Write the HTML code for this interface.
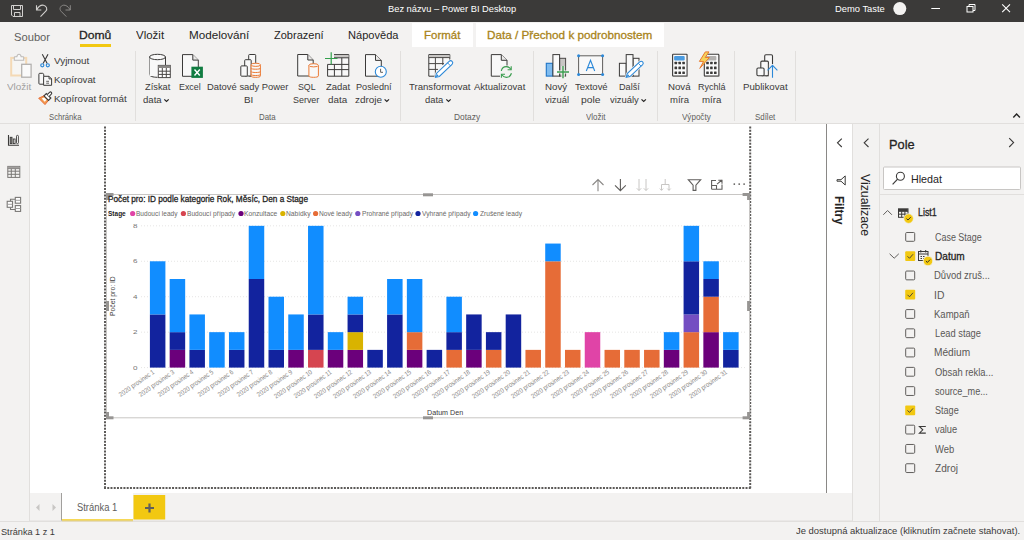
<!DOCTYPE html>
<html><head><meta charset="utf-8"><style>
html,body{margin:0;padding:0;width:1024px;height:540px;overflow:hidden;background:#fff;position:relative;font-family:"Liberation Sans",sans-serif}
body>div,body>svg,body>span{position:absolute}
span{white-space:pre}
</style></head><body>
<div style="left:0px;top:0px;width:1024px;height:22px;background:#3b3a39;"></div>
<div style="left:0px;top:22px;width:1024px;height:101px;background:#f3f2f1;"></div>
<div style="left:0px;top:123px;width:1024px;height:1px;background:#e1dfdd;"></div>
<div style="left:412px;top:23px;width:61px;height:24px;background:#fff;"></div>
<div style="left:476px;top:23px;width:188px;height:24px;background:#fff;"></div>
<div style="left:80px;top:44px;width:31px;height:3px;background:#f2c811;"></div>
<div style="left:0px;top:124px;width:29px;height:397px;background:#f3f2f1;"></div>
<div style="left:29px;top:124px;width:1px;height:397px;background:#e1dfdd;"></div>
<div style="left:30px;top:124px;width:796px;height:369px;background:#fff;"></div>
<div style="left:826px;top:124px;width:1px;height:369px;background:#8a8886;"></div>
<div style="left:827px;top:124px;width:25px;height:369px;background:#fff;"></div>
<div style="left:852px;top:124px;width:1px;height:397px;background:#e1dfdd;"></div>
<div style="left:853px;top:124px;width:26px;height:397px;background:#f3f2f1;"></div>
<div style="left:879px;top:124px;width:1px;height:397px;background:#e1dfdd;"></div>
<div style="left:880px;top:124px;width:144px;height:397px;background:#f3f2f1;"></div>
<div style="left:30px;top:493px;width:822px;height:28px;background:#f3f2f1;"></div>
<div style="left:0px;top:521px;width:1024px;height:1px;background:#e1dfdd;"></div>
<div style="left:0px;top:522px;width:1024px;height:18px;background:#f3f2f1;"></div>
<svg style="left:0;top:0" width="1024" height="540" viewBox="0 0 1024 540"><g fill="none" stroke="#d2d0ce" stroke-width="1"><path d="M11.5 5.5H22.5V16.5H13L11.5 15Z"/><path d="M13.5 5.5V9.5H20.5V5.5"/><path d="M14.5 16.5V12.5H20V16.5"/></g><path d="M36.5 5.2V10H41.3M36.6 9.9C38.5 6.5 41 4.8 43.5 5.2C46.5 5.8 47.8 9 45.8 11.2L40.5 16.6" fill="none" stroke="#d2d0ce" stroke-width="1.1"/><path d="M70.3 5.2V10H65.5M70.2 9.9C68.3 6.5 65.8 4.8 63.3 5.2C60.3 5.8 59 9 61 11.2L66.3 16.6" fill="none" stroke="#8a8886" stroke-width="1"/><circle cx="899.8" cy="8.6" r="6.5" fill="#f3f2f1"/><path d="M931.3 8.5H940" stroke="#fff" stroke-width="1"/><g fill="none" stroke="#fff" stroke-width="1"><rect x="967" y="6.5" width="6" height="5.5"/><path d="M969 6.5V4.5H975V10.5H973"/></g><path d="M1002.2 4.3L1010 12.1M1010 4.3L1002.2 12.1" stroke="#fff" stroke-width="1.1"/><rect x="11.2" y="57.9" width="15" height="17.6" fill="#f6f5f3" stroke="#f4d9b5" stroke-width="2"/><path d="M14.3 60.2V57.5Q14.3 56.8 15 56.8H16.8Q17.3 54.2 19 54.2Q20.7 54.2 21.2 56.8H23Q23.7 56.8 23.7 57.5V60.2Z" fill="#f8f8f8" stroke="#bdbbb9" stroke-width="1.1"/><rect x="21.7" y="64.3" width="9.4" height="12.9" fill="#fafafa" stroke="#b3b1af" stroke-width="1.3"/><path d="M42.3 54.3L47.2 63.6M48 54.3L43.1 63.6" stroke="#3b3a39" stroke-width="1.1" fill="none"/><circle cx="42.3" cy="65.3" r="1.55" fill="none" stroke="#2b88d8" stroke-width="1.2"/><circle cx="47.8" cy="65.3" r="1.55" fill="none" stroke="#2b88d8" stroke-width="1.2"/><path d="M43.5 84.2H39.8Q38.9 84.2 38.9 83.3V74.2Q38.9 73.3 39.8 73.3H42.5Q43.4 73.3 43.6 74.2L43.8 76" fill="#f8f8f8" stroke="#3b3a39" stroke-width="1"/><path d="M43.6 76.3H49L51.6 78.9V85.3H43.6Z" fill="#f8f8f8" stroke="#3b3a39" stroke-width="1"/><path d="M49 76.3V78.9H51.6" fill="none" stroke="#3b3a39" stroke-width="0.9"/><path d="M46.2 81.3H49M46.2 83.2H49" stroke="#3b3a39" stroke-width="0.8"/><path d="M38.7 98.2L44 95.8L48.5 100.3L45 104.6Z" fill="#f39a4e" stroke="#e66c37" stroke-width="1"/><path d="M41.8 98.4L44.2 97.4L46.6 99.8L44.7 101.8Z" fill="#fff"/><path d="M44 95.8L46.3 93.5L50.8 98L48.5 100.3Z" fill="#fff" stroke="#3b3a39" stroke-width="1.2"/><path d="M47.2 94.6L49.5 92.3Q50.5 91.4 51.4 92.3Q52.2 93.2 51.3 94.1L49.1 96.5" fill="#fff" stroke="#3b3a39" stroke-width="1.1"/><path d="M149.5 57V74.5C149.5 76.2 153 77.3 157.5 77.3" fill="#f8f8f8" stroke="#3b3a39" stroke-width="1"/><path d="M149.5 57V76H158V65H165.5V57Z" fill="#f8f8f8"/><ellipse cx="157.5" cy="57" rx="8" ry="2.7" fill="#f8f8f8" stroke="#3b3a39" stroke-width="1"/><path d="M165.5 57V65" stroke="#3b3a39" stroke-width="1"/><rect x="158.3" y="65.4" width="12" height="12.2" fill="#fff" stroke="#4a4846" stroke-width="1"/><rect x="158.3" y="65.4" width="12" height="2.6" fill="#8a8886"/><path d="M158.3 71.2H170.3M158.3 74.4H170.3M162.3 68V77.6M166.3 68V77.6" stroke="#4a4846" stroke-width="1"/><path d="M182.5 54.6H192.8L198.3 60.1V76.3H182.5Z" fill="#f8f8f8" stroke="#3b3a39" stroke-width="1"/><path d="M192.8 54.6V60.1H198.3" fill="#eae9e8" stroke="#3b3a39" stroke-width="1"/><rect x="191.4" y="66.7" width="11.5" height="11.2" fill="#107c41"/><path d="M194.5 69.5L199.8 75.5M199.8 69.5L194.5 75.5" stroke="#fff" stroke-width="1.4"/><g fill="#f8f8f8" stroke="#3b3a39" stroke-width="1"><rect x="248.7" y="54.5" width="7" height="21.5" rx="0.8"/><rect x="244.7" y="59.7" width="6.5" height="16.3" rx="0.8"/><rect x="240.8" y="65.9" width="6.5" height="10.3" rx="0.8"/></g><g fill="#f8f8f8" stroke="#eb7a35" stroke-width="1"><path d="M251.1 64.8V75.9C251.1 77 253.3 77.3 255.8 77.3C258.3 77.3 260.4 77 260.4 75.9V64.8"/><ellipse cx="255.75" cy="64.8" rx="4.65" ry="1.6"/><path d="M251.1 68.3C251.1 69.5 260.4 69.5 260.4 68.3M251.1 71.6C251.1 72.8 260.4 72.8 260.4 71.6M251.1 74.6C251.1 75.8 260.4 75.8 260.4 74.6" fill="none"/></g><path d="M297.7 54.5H307.8L313.2 60V76H297.7Z" fill="#f8f8f8" stroke="#3b3a39" stroke-width="1"/><path d="M307.8 54.5V60H313.2" fill="#eae9e8" stroke="#3b3a39" stroke-width="1"/><g fill="#f8f8f8" stroke="#eb7a35" stroke-width="1"><path d="M308.9 65.3V75.9C308.9 77 311.2 77.3 313.6 77.3C316 77.3 318.4 77 318.4 75.9V65.3"/><ellipse cx="313.65" cy="65.3" rx="4.75" ry="1.6"/></g><path d="M327.6 64.4V76.2H348.8V54.6H334" fill="#f8f8f8" stroke="#3b3a39" stroke-width="1"/><rect x="334" y="55" width="14.5" height="2.6" fill="#c8c6c4"/><path d="M334 57.8H348.8M327.6 64.4H348.8M327.6 69.6H348.8M334.4 64.4V76.2M341.8 57.8V76.2" stroke="#3b3a39" stroke-width="1"/><path d="M325 58.5H337.5M331.2 52.3V64.6" stroke="#33a04d" stroke-width="1.2"/><path d="M365.5 54.6H375.5L381.3 60.4V76.2H365.5Z" fill="#f8f8f8" stroke="#3b3a39" stroke-width="1"/><path d="M375.5 54.6V60.4H381.3" fill="#eae9e8" stroke="#3b3a39" stroke-width="1"/><circle cx="380.8" cy="71.7" r="5.5" fill="#fff" stroke="#2b88d8" stroke-width="1.1"/><path d="M380.6 68.8V72.3H383" fill="none" stroke="#605e5c" stroke-width="1"/><path d="M449.8 60V54.6H428.8V76.2H436" fill="#f8f8f8" stroke="#3b3a39" stroke-width="1"/><rect x="429.2" y="55" width="20.3" height="2.4" fill="#c8c6c4"/><path d="M428.8 57.6H449.8M428.8 63.6H444M428.8 69.4H438M435.4 57.6V76.2M442.8 57.6V65" stroke="#4a4846" stroke-width="1"/><path d="M435.50 77.20L436.44 73.40L449.15 61.28A2.1 2.1 0 0 1 452.05 64.32L439.34 76.44Z" fill="none" stroke="#f3f2f1" stroke-width="2.4"/><path d="M435.50 77.20L436.44 73.40L449.15 61.28A2.1 2.1 0 0 1 452.05 64.32L439.34 76.44Z" fill="#fff" stroke="#2b88d8" stroke-width="1.05"/><path d="M450.46 65.84L447.56 62.80" stroke="#2b88d8" stroke-width="0.9"/><path d="M435.50 77.20L437.16 74.16L438.61 75.68Z" fill="#2b88d8"/><path d="M491.3 54.6H501.3L507 60.3V76.2H491.3Z" fill="#f8f8f8" stroke="#3b3a39" stroke-width="1"/><path d="M501.3 54.6V60.3H507" fill="#eae9e8" stroke="#3b3a39" stroke-width="1"/><rect x="500" y="65.5" width="13" height="13" fill="#f3f2f1"/><path d="M501.3 71C501.8 68.2 503.8 66.6 506.3 66.6C508.4 66.6 509.8 67.7 510.8 69.2M511.4 73.2C510.8 75.8 508.8 77.4 506.3 77.4C504.2 77.4 502.8 76.3 501.8 74.8" fill="none" stroke="#3a9d4f" stroke-width="1.1"/><path d="M511.2 66.2V69.8H507.6M501.4 77.8V74.2H505" fill="none" stroke="#3a9d4f" stroke-width="1.1"/><rect x="546.3" y="63.3" width="6.4" height="12.8" fill="#7fbcf0" stroke="#1f75c7" stroke-width="1.1"/><rect x="559.6" y="58.3" width="6" height="17.8" fill="#c8c6c4" stroke="#4a4846" stroke-width="1"/><rect x="552.9" y="54.6" width="6.7" height="21.5" fill="#fafafa" stroke="#3b3a39" stroke-width="1"/><path d="M557 72H569M563 66V78.2" stroke="#f3f2f1" stroke-width="3.2"/><path d="M557 72H569M563 66V78.2" stroke="#3a9d4f" stroke-width="1.4"/><rect x="578.6" y="55.8" width="24" height="18.7" fill="#f8f8f8" stroke="#605e5c" stroke-width="1"/><g fill="#2b88d8"><circle cx="578.6" cy="55.8" r="1.5"/><circle cx="602.6" cy="55.8" r="1.5"/><circle cx="578.6" cy="74.5" r="1.5"/><circle cx="602.6" cy="74.5" r="1.5"/></g><path d="M586.3 71L590.5 60.3L594.7 71M587.7 67.6H593.3" fill="none" stroke="#2b88d8" stroke-width="1.1"/><g fill="#f8f8f8" stroke="#3b3a39" stroke-width="1"><rect x="633" y="58.3" width="6" height="17.8"/><rect x="619.4" y="63.3" width="6.8" height="12.8"/><rect x="626.2" y="54.6" width="6.8" height="21.5"/></g><path d="M626.20 77.30L627.25 73.59L639.94 61.74A2.0 2.0 0 0 1 642.66 64.66L629.98 76.51Z" fill="none" stroke="#f3f2f1" stroke-width="2.4"/><path d="M626.20 77.30L627.25 73.59L639.94 61.74A2.0 2.0 0 0 1 642.66 64.66L629.98 76.51Z" fill="#fff" stroke="#2b88d8" stroke-width="1.05"/><path d="M641.06 66.16L638.33 63.24" stroke="#2b88d8" stroke-width="0.9"/><path d="M626.20 77.30L627.93 74.32L629.29 75.78Z" fill="#2b88d8"/><rect x="672.6" y="54.3" width="14.5" height="21.8" rx="0.6" fill="#fafafa" stroke="#3b3a39" stroke-width="1.1"/><path d="M687.4 55V76.4H673.1" fill="none" stroke="#8a8886" stroke-width="0.8"/><rect x="674.1" y="56.1" width="10.6" height="4.5" rx="1" fill="#4a9be0"/><rect x="674.5000000000001" y="61.75" width="2.6" height="2.6" rx="0.5" fill="#3b3a39"/><rect x="678.4000000000001" y="61.75" width="2.6" height="2.6" rx="0.5" fill="#3b3a39"/><rect x="682.3000000000001" y="61.75" width="2.6" height="2.6" rx="0.5" fill="#3b3a39"/><rect x="674.5000000000001" y="66.60000000000001" width="2.6" height="2.6" rx="0.5" fill="#3b3a39"/><rect x="678.4000000000001" y="66.60000000000001" width="2.6" height="2.6" rx="0.5" fill="#3b3a39"/><rect x="682.3000000000001" y="66.60000000000001" width="2.6" height="2.6" rx="0.5" fill="#3b3a39"/><rect x="674.5000000000001" y="71.5" width="2.6" height="2.6" rx="0.5" fill="#3b3a39"/><rect x="678.4000000000001" y="71.5" width="2.6" height="2.6" rx="0.5" fill="#3b3a39"/><rect x="682.3000000000001" y="71.5" width="2.6" height="2.6" rx="0.5" fill="#3b3a39"/><rect x="704.3" y="54.3" width="14.5" height="21.8" rx="0.6" fill="#fafafa" stroke="#3b3a39" stroke-width="1.1"/><path d="M719.0999999999999 55V76.4H704.8" fill="none" stroke="#8a8886" stroke-width="0.8"/><rect x="705.8" y="56.1" width="10.6" height="4.5" rx="1" fill="#b3b1af"/><rect x="706.2" y="61.75" width="2.6" height="2.6" rx="0.5" fill="#3b3a39"/><rect x="710.1" y="61.75" width="2.6" height="2.6" rx="0.5" fill="#3b3a39"/><rect x="714.0" y="61.75" width="2.6" height="2.6" rx="0.5" fill="#3b3a39"/><rect x="706.2" y="66.60000000000001" width="2.6" height="2.6" rx="0.5" fill="#3b3a39"/><rect x="710.1" y="66.60000000000001" width="2.6" height="2.6" rx="0.5" fill="#3b3a39"/><rect x="714.0" y="66.60000000000001" width="2.6" height="2.6" rx="0.5" fill="#3b3a39"/><rect x="706.2" y="71.5" width="2.6" height="2.6" rx="0.5" fill="#3b3a39"/><rect x="710.1" y="71.5" width="2.6" height="2.6" rx="0.5" fill="#3b3a39"/><rect x="714.0" y="71.5" width="2.6" height="2.6" rx="0.5" fill="#3b3a39"/><path d="M705.3 51.9L699.4 61.4H703.6L699.8 68.4L709.4 57.5H705.2L709 51.9Z" fill="#f5d35a" stroke="#e8792f" stroke-width="1"/><g fill="#f8f8f8" stroke="#3b3a39" stroke-width="1.1"><rect x="764.7" y="54.7" width="7.8" height="21" rx="1.2"/><rect x="760.8" y="61.1" width="7.6" height="14.6" rx="1.2"/><rect x="756.9" y="68" width="7.2" height="7.7" rx="1.2"/></g><rect x="768.9" y="64" width="9.6" height="14" fill="#f3f2f1"/><path d="M772.5 77.8V65.4M767.6 70.4L772.5 65.4L777.4 70.4" fill="none" stroke="#2b88d8" stroke-width="1.1"/><path d="M164.3 99.4L166.5 101.5L168.7 99.4" fill="none" stroke="#252423" stroke-width="1.2"/><path d="M384.6 99.4L386.8 101.5L389.0 99.4" fill="none" stroke="#252423" stroke-width="1.2"/><path d="M446.3 99.4L448.5 101.5L450.7 99.4" fill="none" stroke="#252423" stroke-width="1.2"/><path d="M641.5 99.4L643.7 101.5L645.9000000000001 99.4" fill="none" stroke="#252423" stroke-width="1.2"/><path d="M135.5 51V121" stroke="#e1dfdd" stroke-width="1"/><path d="M400.5 51V121" stroke="#e1dfdd" stroke-width="1"/><path d="M533.5 51V121" stroke="#e1dfdd" stroke-width="1"/><path d="M657.5 51V121" stroke="#e1dfdd" stroke-width="1"/><path d="M734.5 51V121" stroke="#e1dfdd" stroke-width="1"/><path d="M795.5 51V121" stroke="#e1dfdd" stroke-width="1"/><path d="M1013.3 117.4L1016.6 114L1019.9 117.4" fill="none" stroke="#252423" stroke-width="1.4"/><path d="M8.5 135V145.2H19" fill="none" stroke="#3b3a39" stroke-width="1.1"/><rect x="10.2" y="137.3" width="1.8" height="6.3" fill="#8a8886" stroke="#3b3a39" stroke-width="0.9"/><rect x="13.3" y="139" width="1.8" height="4.6" fill="#fff" stroke="#3b3a39" stroke-width="0.9"/><rect x="16.5" y="135.4" width="1.9" height="8.2" rx="0.8" fill="#fff" stroke="#3b3a39" stroke-width="0.9"/><g fill="none" stroke="#7a7876" stroke-width="1"><rect x="7.8" y="166.4" width="12" height="11"/><path d="M7.8 168.6H19.8M7.8 171.2H19.8M7.8 174.3H19.8M11.3 168.6V177.4M15.3 168.6V177.4"/></g><rect x="8" y="166.6" width="11.6" height="1.8" fill="#a19f9d"/><g fill="#fff" stroke="#7a7876" stroke-width="1.1"><path d="M10.5 201.1V199.2H15M10.5 207.5V209.5H15" fill="none"/><rect x="7.2" y="201.3" width="5.3" height="6"/><rect x="15.3" y="197.4" width="5.3" height="5.8"/><rect x="15.3" y="205.6" width="5.3" height="5.8"/></g><path d="M7.2 204.3H12.5M15.3 200.3H20.6M15.3 208.5H20.6" stroke="#9a9896" stroke-width="0.9"/><path d="M841.8 138.6L837.5 142.8L841.8 147" fill="none" stroke="#3b3a39" stroke-width="1.1"/><path d="M868.5 138.6L864.2 142.8L868.5 147" fill="none" stroke="#3b3a39" stroke-width="1.1"/><path d="M845.2 175.9V185L841 181.2H837V179.7H841Z" fill="none" stroke="#3b3a39" stroke-width="1"/><path d="M1009.2 138.2L1013.6 142.6L1009.2 147" fill="none" stroke="#3b3a39" stroke-width="1.1"/><rect x="883.5" y="167" width="137" height="22.5" rx="1" fill="#fff" stroke="#c8c6c4" stroke-width="1"/><circle cx="900.4" cy="176.3" r="4" fill="none" stroke="#3b3a39" stroke-width="1.1"/><path d="M897.6 179.2L892.6 184.4" stroke="#3b3a39" stroke-width="1.2"/><path d="M880 194.5H1024" stroke="#e1dfdd" stroke-width="1"/><path d="M883.3 214.8L887.6 210.5L891.9 214.8" fill="none" stroke="#605e5c" stroke-width="1"/><g fill="none" stroke="#3b3a39" stroke-width="1"><rect x="898.5" y="208.8" width="9.5" height="8.5"/><path d="M898.5 211.3H908M898.5 214.2H908M901.7 211.3V217.3M904.9 211.3V217.3"/></g><rect x="898.7" y="209" width="9.1" height="2.2" fill="#3b3a39"/><circle cx="908.6" cy="218.6" r="4.8" fill="#f2c811" stroke="#f3f2f1" stroke-width="0.8"/><path d="M906.5 218.6L908 220L910.7 217.2" fill="none" stroke="#252423" stroke-width="0.9"/><rect x="905.7" y="232.50" width="9" height="8.8" rx="1" fill="none" stroke="#605e5c" stroke-width="1"/><rect x="905.2" y="251.27" width="10" height="9.8" rx="1" fill="#f2c811"/><path d="M907.5 256.27L909.5 258.27L913 254.27" fill="none" stroke="#3b3a39" stroke-width="0.9"/><rect x="905.7" y="271.04" width="9" height="8.8" rx="1" fill="none" stroke="#605e5c" stroke-width="1"/><rect x="905.2" y="289.81" width="10" height="9.8" rx="1" fill="#f2c811"/><path d="M907.5 294.81L909.5 296.81L913 292.81" fill="none" stroke="#3b3a39" stroke-width="0.9"/><rect x="905.7" y="309.58" width="9" height="8.8" rx="1" fill="none" stroke="#605e5c" stroke-width="1"/><rect x="905.7" y="328.85" width="9" height="8.8" rx="1" fill="none" stroke="#605e5c" stroke-width="1"/><rect x="905.7" y="348.12" width="9" height="8.8" rx="1" fill="none" stroke="#605e5c" stroke-width="1"/><rect x="905.7" y="367.39" width="9" height="8.8" rx="1" fill="none" stroke="#605e5c" stroke-width="1"/><rect x="905.7" y="386.66" width="9" height="8.8" rx="1" fill="none" stroke="#605e5c" stroke-width="1"/><rect x="905.2" y="405.43" width="10" height="9.8" rx="1" fill="#f2c811"/><path d="M907.5 410.43L909.5 412.43L913 408.43" fill="none" stroke="#3b3a39" stroke-width="0.9"/><rect x="905.7" y="425.20" width="9" height="8.8" rx="1" fill="none" stroke="#605e5c" stroke-width="1"/><rect x="905.7" y="444.47" width="9" height="8.8" rx="1" fill="none" stroke="#605e5c" stroke-width="1"/><rect x="905.7" y="463.74" width="9" height="8.8" rx="1" fill="none" stroke="#605e5c" stroke-width="1"/><path d="M889.6 253.8L894.2 258.2L898.8 253.8" fill="none" stroke="#605e5c" stroke-width="1"/><g fill="none" stroke="#3b3a39" stroke-width="1"><rect x="918.5" y="251.5" width="9.5" height="9"/><path d="M918.5 254H928M920.8 250V252.5M925.7 250V252.5M920.5 256.5H922M923 256.5H924.5M920.5 258.5H922M923 258.5H924.5"/></g><circle cx="928" cy="261" r="4.8" fill="#f2c811" stroke="#f3f2f1" stroke-width="0.8"/><path d="M925.9 261L927.4 262.4L930.1 259.6" fill="none" stroke="#252423" stroke-width="0.9"/><path d="M925.8 426.5H919.4L922.8 429.8L919.4 433.1H925.8" fill="none" stroke="#3b3a39" stroke-width="1.05"/><path d="M39.5 504L36 507.5L39.5 511Z" fill="#c8c6c4"/><path d="M52.5 504L56 507.5L52.5 511Z" fill="#c8c6c4"/><rect x="62" y="493" width="71" height="28" fill="#fff"/><path d="M61.5 493V521" stroke="#a19f9d" stroke-width="1"/><rect x="62" y="519.3" width="71" height="2" fill="#f2c811"/><rect x="133.5" y="495" width="31.7" height="24.5" fill="#f2c811"/><path d="M145 508H154M149.5 503.5V512.5" stroke="#605e5c" stroke-width="2.2"/><path d="M30 521H852" stroke="#e1dfdd" stroke-width="1"/></svg>
<svg style="left:0;top:0" width="1024" height="540" viewBox="0 0 1024 540"><path d="M105 126.5V489M750.2 126.5V489M104 488H751.2" fill="none" stroke="#5c5a58" stroke-width="2" stroke-dasharray="2 1.24"/><path d="M106.5 194.5H749.5V417.8H106.5Z" fill="none" stroke="#c8c6c4" stroke-width="1"/><g fill="#979593"><rect x="106" y="193" width="7.5" height="3"/><rect x="106" y="193" width="3" height="7"/><rect x="423" y="193.3" width="10" height="3"/><rect x="742.6" y="193" width="7.5" height="3"/><rect x="747.1" y="193" width="3" height="7"/><rect x="106" y="301" width="3" height="10"/><rect x="747.1" y="301" width="3" height="10"/><rect x="106" y="416.3" width="7.5" height="3"/><rect x="106" y="412" width="3" height="7"/><rect x="423" y="416.3" width="10" height="3"/><rect x="742.6" y="416.3" width="7.5" height="3"/><rect x="747.1" y="412" width="3" height="7"/></g><path d="M598 191.3V179.6M592.5 185L598 179.5L603.5 185" fill="none" stroke="#8a8886" stroke-width="1.1"/><path d="M620.4 179V190.7M615 185.3L620.4 190.7L625.8 185.3" fill="none" stroke="#605e5c" stroke-width="1.1"/><path d="M639 179V190.5M636.8 188.3L639 190.5L641.2 188.3M646 179V190.5M643.8 188.3L646 190.5L648.2 188.3" fill="none" stroke="#c8c6c4" stroke-width="1"/><path d="M665.2 179V184.5M661.5 190.3V184.5H669V190.3M659.8 188.6L661.5 190.3L663.2 188.6M667.3 188.6L669 190.3L670.7 188.6" fill="none" stroke="#c8c6c4" stroke-width="1"/><path d="M688.3 179.7H700.7L695.9 185.2V190.4H693.1V185.2Z" fill="none" stroke="#605e5c" stroke-width="1.1"/><path d="M711.6 189.2V180.5H716M722 184.5V189.2H711.6M711.6 185.5H716.5V189.2M717 184.2L722 180M718.3 180.2H722V183.8" fill="none" stroke="#605e5c" stroke-width="1.1"/><g fill="#605e5c"><circle cx="734.3" cy="184.1" r="0.9"/><circle cx="739.2" cy="184.1" r="0.9"/><circle cx="744.1" cy="184.1" r="0.9"/></g><path d="M141 367.60H746" stroke="#e6e5e4" stroke-width="1" stroke-dasharray="1 2"/><path d="M141 332.16H746" stroke="#e6e5e4" stroke-width="1" stroke-dasharray="1 2"/><path d="M141 296.72H746" stroke="#e6e5e4" stroke-width="1" stroke-dasharray="1 2"/><path d="M141 261.28H746" stroke="#e6e5e4" stroke-width="1" stroke-dasharray="1 2"/><path d="M141 225.84H746" stroke="#e6e5e4" stroke-width="1" stroke-dasharray="1 2"/><rect x="149.90" y="314.44" width="15.5" height="53.16" fill="#12239e"/><rect x="149.90" y="261.28" width="15.5" height="53.16" fill="#118dff"/><rect x="169.67" y="349.88" width="15.5" height="17.72" fill="#6b007b"/><rect x="169.67" y="332.16" width="15.5" height="17.72" fill="#12239e"/><rect x="169.67" y="279.00" width="15.5" height="53.16" fill="#118dff"/><rect x="189.43" y="349.88" width="15.5" height="17.72" fill="#12239e"/><rect x="189.43" y="314.44" width="15.5" height="35.44" fill="#118dff"/><rect x="209.20" y="332.16" width="15.5" height="35.44" fill="#118dff"/><rect x="228.96" y="349.88" width="15.5" height="17.72" fill="#12239e"/><rect x="228.96" y="332.16" width="15.5" height="17.72" fill="#118dff"/><rect x="248.73" y="279.00" width="15.5" height="88.60" fill="#12239e"/><rect x="248.73" y="225.84" width="15.5" height="53.16" fill="#118dff"/><rect x="268.50" y="349.88" width="15.5" height="17.72" fill="#12239e"/><rect x="268.50" y="296.72" width="15.5" height="53.16" fill="#118dff"/><rect x="288.26" y="349.88" width="15.5" height="17.72" fill="#6b007b"/><rect x="288.26" y="314.44" width="15.5" height="35.44" fill="#118dff"/><rect x="308.03" y="349.88" width="15.5" height="17.72" fill="#d64550"/><rect x="308.03" y="314.44" width="15.5" height="35.44" fill="#12239e"/><rect x="308.03" y="225.84" width="15.5" height="88.60" fill="#118dff"/><rect x="327.79" y="349.88" width="15.5" height="17.72" fill="#6b007b"/><rect x="327.79" y="332.16" width="15.5" height="17.72" fill="#118dff"/><rect x="347.56" y="349.88" width="15.5" height="17.72" fill="#6b007b"/><rect x="347.56" y="332.16" width="15.5" height="17.72" fill="#d9b300"/><rect x="347.56" y="314.44" width="15.5" height="17.72" fill="#12239e"/><rect x="347.56" y="296.72" width="15.5" height="17.72" fill="#118dff"/><rect x="367.33" y="349.88" width="15.5" height="17.72" fill="#12239e"/><rect x="387.09" y="314.44" width="15.5" height="53.16" fill="#12239e"/><rect x="387.09" y="279.00" width="15.5" height="35.44" fill="#118dff"/><rect x="406.86" y="349.88" width="15.5" height="17.72" fill="#6b007b"/><rect x="406.86" y="332.16" width="15.5" height="17.72" fill="#e66c37"/><rect x="406.86" y="279.00" width="15.5" height="53.16" fill="#118dff"/><rect x="426.62" y="349.88" width="15.5" height="17.72" fill="#12239e"/><rect x="446.39" y="349.88" width="15.5" height="17.72" fill="#e66c37"/><rect x="446.39" y="332.16" width="15.5" height="17.72" fill="#12239e"/><rect x="446.39" y="296.72" width="15.5" height="35.44" fill="#118dff"/><rect x="466.16" y="349.88" width="15.5" height="17.72" fill="#6b007b"/><rect x="466.16" y="314.44" width="15.5" height="35.44" fill="#12239e"/><rect x="485.92" y="349.88" width="15.5" height="17.72" fill="#e66c37"/><rect x="485.92" y="332.16" width="15.5" height="17.72" fill="#12239e"/><rect x="505.69" y="314.44" width="15.5" height="53.16" fill="#12239e"/><rect x="525.45" y="349.88" width="15.5" height="17.72" fill="#e66c37"/><rect x="545.22" y="261.28" width="15.5" height="106.32" fill="#e66c37"/><rect x="545.22" y="243.56" width="15.5" height="17.72" fill="#118dff"/><rect x="564.99" y="349.88" width="15.5" height="17.72" fill="#e66c37"/><rect x="584.75" y="332.16" width="15.5" height="35.44" fill="#e044a7"/><rect x="604.52" y="349.88" width="15.5" height="17.72" fill="#e66c37"/><rect x="624.28" y="349.88" width="15.5" height="17.72" fill="#e66c37"/><rect x="644.05" y="349.88" width="15.5" height="17.72" fill="#e66c37"/><rect x="663.82" y="349.88" width="15.5" height="17.72" fill="#6b007b"/><rect x="663.82" y="332.16" width="15.5" height="17.72" fill="#118dff"/><rect x="683.58" y="332.16" width="15.5" height="35.44" fill="#e66c37"/><rect x="683.58" y="314.44" width="15.5" height="17.72" fill="#744ec2"/><rect x="683.58" y="261.28" width="15.5" height="53.16" fill="#12239e"/><rect x="683.58" y="225.84" width="15.5" height="35.44" fill="#118dff"/><rect x="703.35" y="332.16" width="15.5" height="35.44" fill="#6b007b"/><rect x="703.35" y="296.72" width="15.5" height="35.44" fill="#e66c37"/><rect x="703.35" y="279.00" width="15.5" height="17.72" fill="#12239e"/><rect x="703.35" y="261.28" width="15.5" height="17.72" fill="#118dff"/><rect x="723.11" y="349.88" width="15.5" height="17.72" fill="#12239e"/><rect x="723.11" y="332.16" width="15.5" height="17.72" fill="#118dff"/><circle cx="132.65" cy="213.5" r="2.6" fill="#e044a7"/><circle cx="183.4" cy="213.5" r="2.6" fill="#d64550"/><circle cx="241" cy="213.5" r="2.6" fill="#6b007b"/><circle cx="282.8" cy="213.5" r="2.6" fill="#d9b300"/><circle cx="315.6" cy="213.5" r="2.6" fill="#e66c37"/><circle cx="357.8" cy="213.5" r="2.6" fill="#744ec2"/><circle cx="418" cy="213.5" r="2.6" fill="#12239e"/><circle cx="475.6" cy="213.5" r="2.6" fill="#118dff"/></svg>
<span style="left:388.03805970149256px;top:4.23px;font-size:9.8px;line-height:9.8px;font-weight:400;color:#ffffff;transform:scaleX(0.9493);transform-origin:0 0;">Bez názvu – Power BI Desktop</span>
<span style="left:835.2838235294117px;top:4.33px;font-size:9.8px;line-height:9.8px;font-weight:400;color:#ffffff;transform:scaleX(0.9549);transform-origin:0 0;">Demo Taste</span>
<span style="left:14.313698630136987px;top:31.50px;font-size:11.5px;line-height:11.5px;font-weight:400;color:#605e5c;transform:scaleX(0.9726);transform-origin:0 0;">Soubor</span>
<span style="left:79.3448275862069px;top:30.20px;font-size:11.5px;line-height:11.5px;font-weight:400;color:#252423;-webkit-text-stroke:0.3px #252423;transform:scaleX(1.0552);transform-origin:0 0;">Domů</span>
<span style="left:135.55045045045046px;top:29.50px;font-size:11.5px;line-height:11.5px;font-weight:400;color:#252423;transform:scaleX(0.9982);transform-origin:0 0;">Vložit</span>
<span style="left:188.7854077253219px;top:29.50px;font-size:11.5px;line-height:11.5px;font-weight:400;color:#252423;transform:scaleX(1.0146);transform-origin:0 0;">Modelování</span>
<span style="left:273.56067961165047px;top:29.50px;font-size:11.5px;line-height:11.5px;font-weight:400;color:#252423;transform:scaleX(0.9573);transform-origin:0 0;">Zobrazení</span>
<span style="left:348.3368932038835px;top:29.50px;font-size:11.5px;line-height:11.5px;font-weight:400;color:#252423;transform:scaleX(0.9631);transform-origin:0 0;">Nápověda</span>
<span style="left:423.60281690140846px;top:29.50px;font-size:11.5px;line-height:11.5px;font-weight:400;color:#a9841a;-webkit-text-stroke:0.3px #a9841a;transform:scaleX(0.9972);transform-origin:0 0;">Formát</span>
<span style="left:486.58164852255055px;top:29.50px;font-size:11.5px;line-height:11.5px;font-weight:400;color:#a9841a;-webkit-text-stroke:0.3px #a9841a;transform:scaleX(1.0184);transform-origin:0 0;">Data / Přechod k podrobnostem</span>
<span style="left:7.439130434782609px;top:81.56px;font-size:9.5px;line-height:9.5px;font-weight:400;color:#a19f9d;transform:scaleX(1.0435);transform-origin:0 0;">Vložit</span>
<span style="left:54.440000000000005px;top:56.37px;font-size:9.5px;line-height:9.5px;font-weight:400;color:#3b3a39;transform:scaleX(1.0400);transform-origin:0 0;">Vyjmout</span>
<span style="left:53.93396226415095px;top:75.47px;font-size:9.5px;line-height:9.5px;font-weight:400;color:#3b3a39;transform:scaleX(1.0214);transform-origin:0 0;">Kopírovat</span>
<span style="left:53.92302158273382px;top:94.36px;font-size:9.5px;line-height:9.5px;font-weight:400;color:#3b3a39;transform:scaleX(1.0360);transform-origin:0 0;">Kopírovat formát</span>
<span style="left:49.28169934640523px;top:112.90px;font-size:9.2px;line-height:9.2px;font-weight:400;color:#605e5c;transform:scaleX(0.8366);transform-origin:0 0;">Schránka</span>
<span style="left:259.156px;top:112.90px;font-size:9.2px;line-height:9.2px;font-weight:400;color:#605e5c;transform:scaleX(0.8587);transform-origin:0 0;">Data</span>
<span style="left:454.0162162162162px;top:112.90px;font-size:9.2px;line-height:9.2px;font-weight:400;color:#605e5c;transform:scaleX(0.9117);transform-origin:0 0;">Dotazy</span>
<span style="left:585.5px;top:112.90px;font-size:9.2px;line-height:9.2px;font-weight:400;color:#605e5c;transform:scaleX(0.8667);transform-origin:0 0;">Vložit</span>
<span style="left:682.0px;top:112.90px;font-size:9.2px;line-height:9.2px;font-weight:400;color:#605e5c;transform:scaleX(0.8769);transform-origin:0 0;">Výpočty</span>
<span style="left:754.5695652173913px;top:112.90px;font-size:9.2px;line-height:9.2px;font-weight:400;color:#605e5c;transform:scaleX(0.8609);transform-origin:0 0;">Sdílet</span>
<span style="left:145.05588235294118px;top:81.97px;font-size:9.5px;line-height:9.5px;font-weight:400;color:#3b3a39;transform:scaleX(0.9765);transform-origin:0 0;">Získat</span>
<span style="left:143.39722222222224px;top:94.56px;font-size:9.5px;line-height:9.5px;font-weight:400;color:#3b3a39;transform:scaleX(1.0056);transform-origin:0 0;">data</span>
<span style="left:179.10000000000002px;top:81.97px;font-size:9.5px;line-height:9.5px;font-weight:400;color:#3b3a39;transform:scaleX(0.9333);transform-origin:0 0;">Excel</span>
<span style="left:207.05828220858896px;top:81.97px;font-size:9.5px;line-height:9.5px;font-weight:400;color:#3b3a39;transform:scaleX(0.9890);transform-origin:0 0;">Datové sady Power</span>
<span style="left:243.92413793103447px;top:94.56px;font-size:9.5px;line-height:9.5px;font-weight:400;color:#3b3a39;transform:scaleX(1.0345);transform-origin:0 0;">BI</span>
<span style="left:297.53698630136984px;top:81.97px;font-size:9.5px;line-height:9.5px;font-weight:400;color:#3b3a39;transform:scaleX(0.9260);transform-origin:0 0;">SQL</span>
<span style="left:292.9302752293578px;top:94.56px;font-size:9.5px;line-height:9.5px;font-weight:400;color:#3b3a39;transform:scaleX(0.9394);transform-origin:0 0;">Server</span>
<span style="left:326.05104166666666px;top:81.97px;font-size:9.5px;line-height:9.5px;font-weight:400;color:#3b3a39;transform:scaleX(0.9958);transform-origin:0 0;">Zadat</span>
<span style="left:328.3833333333333px;top:94.56px;font-size:9.5px;line-height:9.5px;font-weight:400;color:#3b3a39;transform:scaleX(1.0333);transform-origin:0 0;">data</span>
<span style="left:355.8779310344828px;top:81.97px;font-size:9.5px;line-height:9.5px;font-weight:400;color:#3b3a39;transform:scaleX(0.9628);transform-origin:0 0;">Poslední</span>
<span style="left:355.476px;top:94.56px;font-size:9.5px;line-height:9.5px;font-weight:400;color:#3b3a39;transform:scaleX(1.0480);transform-origin:0 0;">zdroje</span>
<span style="left:409.047520661157px;top:81.97px;font-size:9.5px;line-height:9.5px;font-weight:400;color:#3b3a39;transform:scaleX(1.0099);transform-origin:0 0;">Transformovat</span>
<span style="left:425.2055555555555px;top:94.56px;font-size:9.5px;line-height:9.5px;font-weight:400;color:#3b3a39;transform:scaleX(0.9889);transform-origin:0 0;">data</span>
<span style="left:473.9px;top:81.97px;font-size:9.5px;line-height:9.5px;font-weight:400;color:#3b3a39;transform:scaleX(1.0010);transform-origin:0 0;">Aktualizovat</span>
<span style="left:545.1301204819276px;top:81.97px;font-size:9.5px;line-height:9.5px;font-weight:400;color:#3b3a39;transform:scaleX(1.0265);transform-origin:0 0;">Nový</span>
<span style="left:544.9px;top:94.56px;font-size:9.5px;line-height:9.5px;font-weight:400;color:#3b3a39;transform:scaleX(0.9895);transform-origin:0 0;">vizuál</span>
<span style="left:574.9507812500001px;top:81.97px;font-size:9.5px;line-height:9.5px;font-weight:400;color:#3b3a39;transform:scaleX(0.9969);transform-origin:0 0;">Textové</span>
<span style="left:580.7850746268657px;top:94.56px;font-size:9.5px;line-height:9.5px;font-weight:400;color:#3b3a39;transform:scaleX(1.0866);transform-origin:0 0;">pole</span>
<span style="left:618.9807228915663px;top:81.97px;font-size:9.5px;line-height:9.5px;font-weight:400;color:#3b3a39;transform:scaleX(0.9590);transform-origin:0 0;">Další</span>
<span style="left:610.3px;top:94.56px;font-size:9.5px;line-height:9.5px;font-weight:400;color:#3b3a39;transform:scaleX(0.9931);transform-origin:0 0;">vizuály</span>
<span style="left:668.1360465116279px;top:81.97px;font-size:9.5px;line-height:9.5px;font-weight:400;color:#3b3a39;transform:scaleX(1.0186);transform-origin:0 0;">Nová</span>
<span style="left:669.9479452054795px;top:94.56px;font-size:9.5px;line-height:9.5px;font-weight:400;color:#3b3a39;transform:scaleX(1.0027);transform-origin:0 0;">míra</span>
<span style="left:697.8884955752212px;top:81.97px;font-size:9.5px;line-height:9.5px;font-weight:400;color:#3b3a39;transform:scaleX(0.9487);transform-origin:0 0;">Rychlá</span>
<span style="left:701.9356164383562px;top:94.56px;font-size:9.5px;line-height:9.5px;font-weight:400;color:#3b3a39;transform:scaleX(1.0192);transform-origin:0 0;">míra</span>
<span style="left:742.6360465116279px;top:81.97px;font-size:9.5px;line-height:9.5px;font-weight:400;color:#3b3a39;transform:scaleX(1.0186);transform-origin:0 0;">Publikovat</span>
<span style="left:888.6509803921568px;top:138.05px;font-size:13.5px;line-height:13.5px;font-weight:400;color:#252423;-webkit-text-stroke:0.3px #252423;transform:scaleX(0.9490);transform-origin:0 0;">Pole</span>
<span style="left:911.00826446281px;top:173.60px;font-size:10.8px;line-height:10.8px;font-weight:400;color:#252423;transform:scaleX(0.9917);transform-origin:0 0;">Hledat</span>
<span style="left:918.1678571428571px;top:206.63px;font-size:10.5px;line-height:10.5px;font-weight:400;color:#252423;-webkit-text-stroke:0.3px #252423;transform:scaleX(0.8429);transform-origin:0 0;">List1</span>
<span style="left:934.7531707317073px;top:232.70px;font-size:10px;line-height:10px;font-weight:400;color:#5a5856;transform:scaleX(0.8937);transform-origin:0 0;">Case Stage</span>
<span style="left:934.8805084745763px;top:251.33px;font-size:10.5px;line-height:10.5px;font-weight:400;color:#252423;-webkit-text-stroke:0.3px #252423;transform:scaleX(0.9593);transform-origin:0 0;">Datum</span>
<span style="left:934.4873362445416px;top:271.24px;font-size:10px;line-height:10px;font-weight:400;color:#5a5856;transform:scaleX(0.9502);transform-origin:0 0;">Důvod zruš...</span>
<span style="left:934.164705882353px;top:290.51px;font-size:10px;line-height:10px;font-weight:400;color:#5a5856;transform:scaleX(1.0353);transform-origin:0 0;">ID</span>
<span style="left:934.4854166666668px;top:309.78px;font-size:10px;line-height:10px;font-weight:400;color:#5a5856;transform:scaleX(0.9528);transform-origin:0 0;">Kampaň</span>
<span style="left:934.5036269430052px;top:329.05px;font-size:10px;line-height:10px;font-weight:400;color:#5a5856;transform:scaleX(0.9285);transform-origin:0 0;">Lead stage</span>
<span style="left:934.4379562043796px;top:348.32px;font-size:10px;line-height:10px;font-weight:400;color:#5a5856;transform:scaleX(1.0161);transform-origin:0 0;">Médium</span>
<span style="left:934.7311475409837px;top:367.59px;font-size:10px;line-height:10px;font-weight:400;color:#5a5856;transform:scaleX(0.9377);transform-origin:0 0;">Obsah rekla...</span>
<span style="left:934.9713656387665px;top:386.86px;font-size:10px;line-height:10px;font-weight:400;color:#5a5856;transform:scaleX(0.9145);transform-origin:0 0;">source_me...</span>
<span style="left:934.7465346534653px;top:406.13px;font-size:10px;line-height:10px;font-weight:400;color:#5a5856;transform:scaleX(0.9069);transform-origin:0 0;">Stage</span>
<span style="left:935.2px;top:425.40px;font-size:10px;line-height:10px;font-weight:400;color:#5a5856;transform:scaleX(0.9277);transform-origin:0 0;">value</span>
<span style="left:935.2px;top:444.67px;font-size:10px;line-height:10px;font-weight:400;color:#5a5856;transform:scaleX(0.9400);transform-origin:0 0;">Web</span>
<span style="left:934.9477272727273px;top:463.94px;font-size:10px;line-height:10px;font-weight:400;color:#5a5856;transform:scaleX(1.0091);transform-origin:0 0;">Zdroj</span>
<span style="left:845.36px;top:195.70px;font-size:12px;line-height:12px;font-weight:700;color:#252423;transform:rotate(90.0deg) scaleX(0.9712);transform-origin:0 0;">Filtry</span>
<span style="left:870.86px;top:174.30px;font-size:12px;line-height:12px;font-weight:400;color:#252423;transform:rotate(90.0deg) scaleX(1.0251);transform-origin:0 0;">Vizualizace</span>
<span style="left:77.23053892215569px;top:503.30px;font-size:10px;line-height:10px;font-weight:400;color:#605e5c;transform:scaleX(0.9389);transform-origin:0 0;">Stránka 1</span>
<span style="left:0.5181818181818182px;top:527.06px;font-size:9.5px;line-height:9.5px;font-weight:400;color:#3b3a39;transform:scaleX(0.9636);transform-origin:0 0;">Stránka 1 z 1</span>
<span style="left:795.7513935340022px;top:526.26px;font-size:9.5px;line-height:9.5px;font-weight:400;color:#3b3a39;transform:scaleX(0.9944);transform-origin:0 0;">Je dostupná aktualizace (kliknutím začnete stahovat).</span>
<span style="left:136.35191256830603px;top:209.95px;font-size:7.3px;line-height:7.3px;font-weight:400;color:#6b6967;transform:scaleX(0.8962);transform-origin:0 0;">Budoucí leady</span>
<span style="left:187.04761904761904px;top:209.95px;font-size:7.3px;line-height:7.3px;font-weight:400;color:#6b6967;transform:scaleX(0.9048);transform-origin:0 0;">Budoucí případy</span>
<span style="left:244.13900709219857px;top:209.95px;font-size:7.3px;line-height:7.3px;font-weight:400;color:#6b6967;transform:scaleX(0.9220);transform-origin:0 0;">Konzultace</span>
<span style="left:285.74285714285713px;top:209.95px;font-size:7.3px;line-height:7.3px;font-weight:400;color:#6b6967;transform:scaleX(0.9143);transform-origin:0 0;">Nabídky</span>
<span style="left:319.34444444444443px;top:209.95px;font-size:7.3px;line-height:7.3px;font-weight:400;color:#6b6967;transform:scaleX(0.9111);transform-origin:0 0;">Nové leady</span>
<span style="left:361.5470852017937px;top:209.95px;font-size:7.3px;line-height:7.3px;font-weight:400;color:#6b6967;transform:scaleX(0.9058);transform-origin:0 0;">Prohrané případy</span>
<span style="left:421.8px;top:209.95px;font-size:7.3px;line-height:7.3px;font-weight:400;color:#6b6967;transform:scaleX(0.9108);transform-origin:0 0;">Vyhrané případy</span>
<span style="left:479.57322404371587px;top:209.95px;font-size:7.3px;line-height:7.3px;font-weight:400;color:#6b6967;transform:scaleX(0.9071);transform-origin:0 0;">Zrušené leady</span>
<span style="left:108.37692307692308px;top:209.95px;font-size:7.3px;line-height:7.3px;font-weight:700;color:#252423;transform:scaleX(0.8923);transform-origin:0 0;">Stage</span>
<span style="left:108.31536697247707px;top:195.33px;font-size:9px;line-height:9px;font-weight:400;color:#252423;-webkit-text-stroke:0.3px #252423;transform:scaleX(0.9128);transform-origin:0 0;">Počet pro: ID podle kategorie Rok, Měsíc, Den a Stage</span>
<span style="left:132.875px;top:364.69px;font-size:6.2px;line-height:6.2px;font-weight:400;color:#777573;transform:scaleX(1.3000);transform-origin:0 0;">0</span>
<span style="left:132.875px;top:329.25px;font-size:6.2px;line-height:6.2px;font-weight:400;color:#777573;transform:scaleX(1.3000);transform-origin:0 0;">2</span>
<span style="left:132.875px;top:293.81px;font-size:6.2px;line-height:6.2px;font-weight:400;color:#777573;transform:scaleX(1.3000);transform-origin:0 0;">4</span>
<span style="left:132.875px;top:258.37px;font-size:6.2px;line-height:6.2px;font-weight:400;color:#777573;transform:scaleX(1.3000);transform-origin:0 0;">6</span>
<span style="left:132.875px;top:222.93px;font-size:6.2px;line-height:6.2px;font-weight:400;color:#777573;transform:scaleX(1.3000);transform-origin:0 0;">8</span>
<span style="left:108.75px;top:316.40px;font-size:7.3px;line-height:7.3px;font-weight:400;color:#3b3a39;transform:rotate(-90.0deg) scaleX(0.9344);transform-origin:0 0;">Počet pro: ID</span>
<span style="left:426.5097222222222px;top:408.55px;font-size:7.3px;line-height:7.3px;font-weight:400;color:#3b3a39;transform:scaleX(0.9806);transform-origin:0 0;">Datum Den</span>
<span style="left:106.78px;top:368.44px;font-size:6.8px;line-height:6.8px;color:#8a8886;transform-origin:48.38px 5.76px;transform:rotate(-35deg) scaleX(0.86);">2020 prosinec 1</span>
<span style="left:126.54px;top:368.44px;font-size:6.8px;line-height:6.8px;color:#8a8886;transform-origin:48.38px 5.76px;transform:rotate(-35deg) scaleX(0.86);">2020 prosinec 3</span>
<span style="left:146.31px;top:368.44px;font-size:6.8px;line-height:6.8px;color:#8a8886;transform-origin:48.38px 5.76px;transform:rotate(-35deg) scaleX(0.86);">2020 prosinec 4</span>
<span style="left:166.07px;top:368.44px;font-size:6.8px;line-height:6.8px;color:#8a8886;transform-origin:48.38px 5.76px;transform:rotate(-35deg) scaleX(0.86);">2020 prosinec 5</span>
<span style="left:185.84px;top:368.44px;font-size:6.8px;line-height:6.8px;color:#8a8886;transform-origin:48.38px 5.76px;transform:rotate(-35deg) scaleX(0.86);">2020 prosinec 6</span>
<span style="left:205.61px;top:368.44px;font-size:6.8px;line-height:6.8px;color:#8a8886;transform-origin:48.38px 5.76px;transform:rotate(-35deg) scaleX(0.86);">2020 prosinec 7</span>
<span style="left:225.37px;top:368.44px;font-size:6.8px;line-height:6.8px;color:#8a8886;transform-origin:48.38px 5.76px;transform:rotate(-35deg) scaleX(0.86);">2020 prosinec 8</span>
<span style="left:245.14px;top:368.44px;font-size:6.8px;line-height:6.8px;color:#8a8886;transform-origin:48.38px 5.76px;transform:rotate(-35deg) scaleX(0.86);">2020 prosinec 9</span>
<span style="left:261.12px;top:368.44px;font-size:6.8px;line-height:6.8px;color:#8a8886;transform-origin:52.16px 5.76px;transform:rotate(-35deg) scaleX(0.86);">2020 prosinec 10</span>
<span style="left:281.39px;top:368.44px;font-size:6.8px;line-height:6.8px;color:#8a8886;transform-origin:51.66px 5.76px;transform:rotate(-35deg) scaleX(0.86);">2020 prosinec 11</span>
<span style="left:300.65px;top:368.44px;font-size:6.8px;line-height:6.8px;color:#8a8886;transform-origin:52.16px 5.76px;transform:rotate(-35deg) scaleX(0.86);">2020 prosinec 12</span>
<span style="left:320.42px;top:368.44px;font-size:6.8px;line-height:6.8px;color:#8a8886;transform-origin:52.16px 5.76px;transform:rotate(-35deg) scaleX(0.86);">2020 prosinec 13</span>
<span style="left:340.19px;top:368.44px;font-size:6.8px;line-height:6.8px;color:#8a8886;transform-origin:52.16px 5.76px;transform:rotate(-35deg) scaleX(0.86);">2020 prosinec 14</span>
<span style="left:359.95px;top:368.44px;font-size:6.8px;line-height:6.8px;color:#8a8886;transform-origin:52.16px 5.76px;transform:rotate(-35deg) scaleX(0.86);">2020 prosinec 15</span>
<span style="left:379.72px;top:368.44px;font-size:6.8px;line-height:6.8px;color:#8a8886;transform-origin:52.16px 5.76px;transform:rotate(-35deg) scaleX(0.86);">2020 prosinec 16</span>
<span style="left:399.48px;top:368.44px;font-size:6.8px;line-height:6.8px;color:#8a8886;transform-origin:52.16px 5.76px;transform:rotate(-35deg) scaleX(0.86);">2020 prosinec 17</span>
<span style="left:419.25px;top:368.44px;font-size:6.8px;line-height:6.8px;color:#8a8886;transform-origin:52.16px 5.76px;transform:rotate(-35deg) scaleX(0.86);">2020 prosinec 18</span>
<span style="left:439.02px;top:368.44px;font-size:6.8px;line-height:6.8px;color:#8a8886;transform-origin:52.16px 5.76px;transform:rotate(-35deg) scaleX(0.86);">2020 prosinec 19</span>
<span style="left:458.78px;top:368.44px;font-size:6.8px;line-height:6.8px;color:#8a8886;transform-origin:52.16px 5.76px;transform:rotate(-35deg) scaleX(0.86);">2020 prosinec 20</span>
<span style="left:478.55px;top:368.44px;font-size:6.8px;line-height:6.8px;color:#8a8886;transform-origin:52.16px 5.76px;transform:rotate(-35deg) scaleX(0.86);">2020 prosinec 21</span>
<span style="left:498.31px;top:368.44px;font-size:6.8px;line-height:6.8px;color:#8a8886;transform-origin:52.16px 5.76px;transform:rotate(-35deg) scaleX(0.86);">2020 prosinec 22</span>
<span style="left:518.08px;top:368.44px;font-size:6.8px;line-height:6.8px;color:#8a8886;transform-origin:52.16px 5.76px;transform:rotate(-35deg) scaleX(0.86);">2020 prosinec 23</span>
<span style="left:537.85px;top:368.44px;font-size:6.8px;line-height:6.8px;color:#8a8886;transform-origin:52.16px 5.76px;transform:rotate(-35deg) scaleX(0.86);">2020 prosinec 24</span>
<span style="left:557.61px;top:368.44px;font-size:6.8px;line-height:6.8px;color:#8a8886;transform-origin:52.16px 5.76px;transform:rotate(-35deg) scaleX(0.86);">2020 prosinec 25</span>
<span style="left:577.38px;top:368.44px;font-size:6.8px;line-height:6.8px;color:#8a8886;transform-origin:52.16px 5.76px;transform:rotate(-35deg) scaleX(0.86);">2020 prosinec 26</span>
<span style="left:597.14px;top:368.44px;font-size:6.8px;line-height:6.8px;color:#8a8886;transform-origin:52.16px 5.76px;transform:rotate(-35deg) scaleX(0.86);">2020 prosinec 27</span>
<span style="left:616.91px;top:368.44px;font-size:6.8px;line-height:6.8px;color:#8a8886;transform-origin:52.16px 5.76px;transform:rotate(-35deg) scaleX(0.86);">2020 prosinec 28</span>
<span style="left:636.68px;top:368.44px;font-size:6.8px;line-height:6.8px;color:#8a8886;transform-origin:52.16px 5.76px;transform:rotate(-35deg) scaleX(0.86);">2020 prosinec 29</span>
<span style="left:656.44px;top:368.44px;font-size:6.8px;line-height:6.8px;color:#8a8886;transform-origin:52.16px 5.76px;transform:rotate(-35deg) scaleX(0.86);">2020 prosinec 30</span>
<span style="left:676.21px;top:368.44px;font-size:6.8px;line-height:6.8px;color:#8a8886;transform-origin:52.16px 5.76px;transform:rotate(-35deg) scaleX(0.86);">2020 prosinec 31</span>
</body></html>
